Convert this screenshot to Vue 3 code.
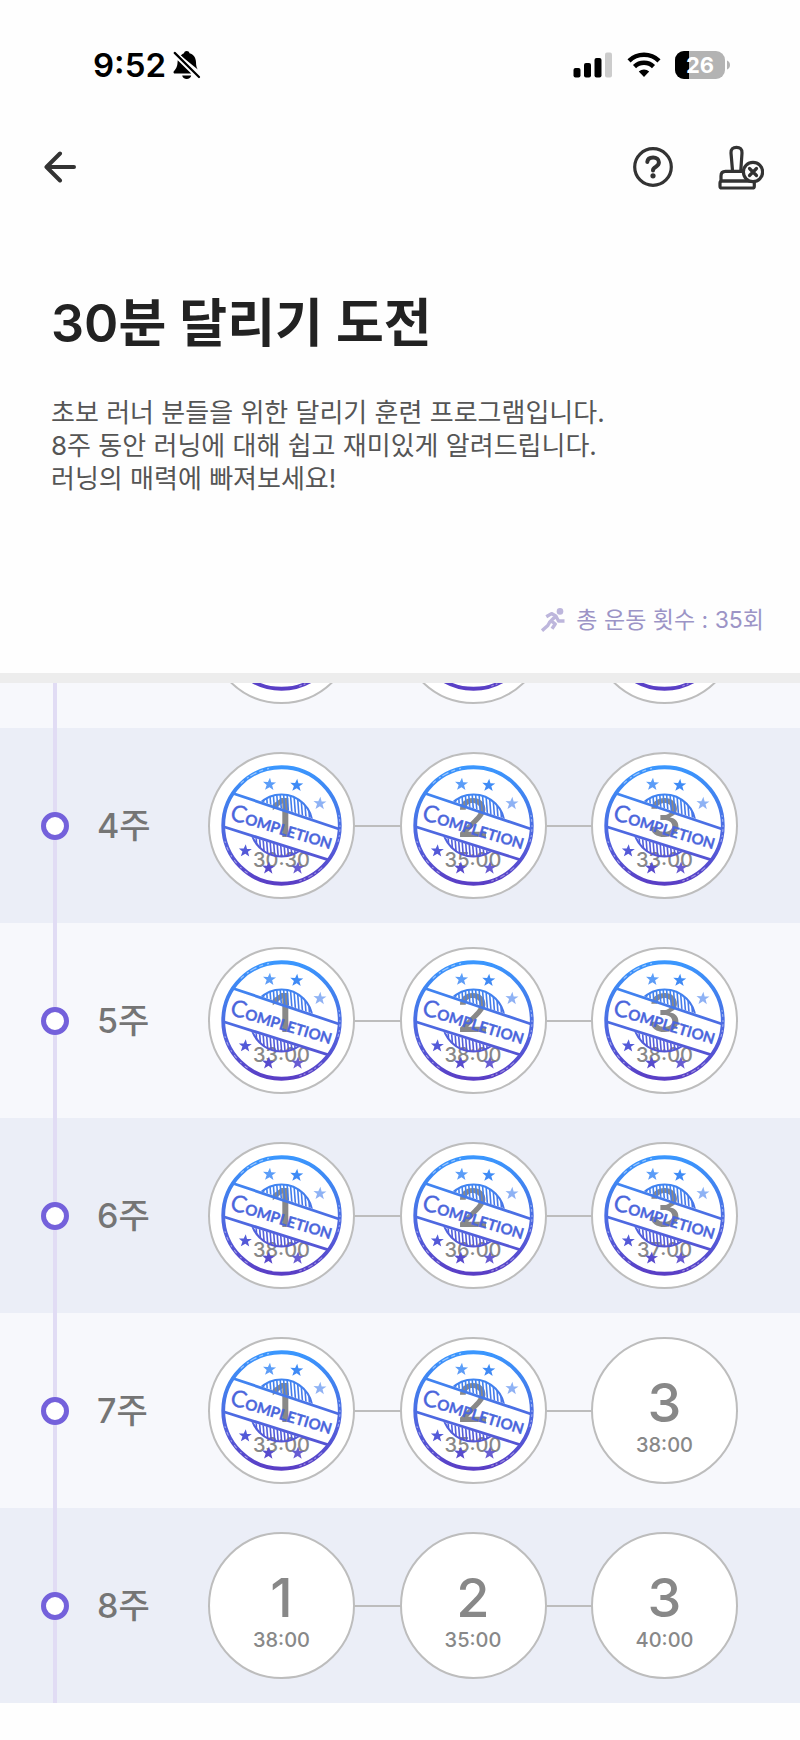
<script setup>
const weeks = [
  { week: 3, clipped: true, runs: [{ done: true }, { done: true }, { done: true }] },
  {
    week: 4,
    runs: [
      { time: '30:30', done: true },
      { time: '35:00', done: true },
      { time: '33:00', done: true }
    ]
  },
  {
    week: 5,
    runs: [
      { time: '33:00', done: true },
      { time: '38:00', done: true },
      { time: '38:00', done: true }
    ]
  },
  {
    week: 6,
    runs: [
      { time: '38:00', done: true },
      { time: '36:00', done: true },
      { time: '37:00', done: true }
    ]
  },
  {
    week: 7,
    runs: [
      { time: '33:00', done: true },
      { time: '35:00', done: true },
      { time: '38:00', done: false }
    ]
  },
  {
    week: 8,
    runs: [
      { time: '38:00', done: false },
      { time: '35:00', done: false },
      { time: '40:00', done: false }
    ]
  }
]

// x, y, opacity
const stars = [
  [48, 19, 0.85],
  [75, 20, 1],
  [98, 38, 0.6],
  [24, 85, 1],
  [47, 102, 1],
  [76, 102, 0.9]
]

const hatch = Array.from({ length: 20 }, (_, i) => 28 + i * 3.4)
</script>

<template>
  <div class="app">
    <!-- Shared stamp artwork -->
    <svg class="defs" width="0" height="0" aria-hidden="true">
      <defs>
        <linearGradient id="ink" gradientUnits="userSpaceOnUse" x1="0" y1="0" x2="0" y2="120">
          <stop offset="0" stop-color="#3a98ff" />
          <stop offset="0.3" stop-color="#4280ee" />
          <stop offset="0.65" stop-color="#5260dc" />
          <stop offset="1" stop-color="#5a3cc4" />
        </linearGradient>
        <clipPath id="outside-banner">
          <path d="M13 27 117 62V0H13ZM4 63 106 95V120H4Z" />
        </clipPath>
        <clipPath id="seal">
          <circle cx="60" cy="60" r="31" />
        </clipPath>
        <symbol id="stamp" viewBox="0 0 120 120">
          <g fill="none" stroke="url(#ink)">
            <circle cx="60" cy="60" r="57.8" stroke-width="3.8" />
            <path d="M13 28.5 117 63.5M3.5 61.5 106.5 94" stroke-width="2.8" />
            <g clip-path="url(#outside-banner)">
              <circle cx="60" cy="60" r="30.8" stroke-width="2" />
              <g clip-path="url(#seal)" stroke-width="1.6">
                <path v-for="x in hatch" :key="x" :d="`M${x} 28 ${x + 5} 92`" />
              </g>
            </g>
          </g>
          <g fill="url(#ink)">
            <g v-for="([x, y, o], i) in stars" :key="i" :opacity="o">
              <path
                :d="`M${x + 0.6} ${y - 6.4}l1.2 4.6 4.8.1-3.9 2.7 1.3 4.8-3.9-2.8-4.4 2.6 1.6-4.8-3.6-3.1 4.8.2z`"
              />
            </g>
          </g>
          <text class="stamp-text" transform="translate(8 54) rotate(16.5)">
            <tspan class="stamp-cap">C</tspan><tspan>OMPLETION</tspan>
          </text>
          <!-- worn ink -->
          <g fill="none" stroke="#fff" stroke-linecap="round">
            <path
              d="M20 18A58 58 0 0 1 50 3"
              stroke-width="1.2"
              stroke-dasharray="3 5 1 3 6 4"
              opacity="0.5"
            />
            <path
              d="M117 50A58 58 0 0 1 116 76"
              stroke-width="1"
              stroke-dasharray="1 3 2 4"
              opacity="0.5"
            />
            <path
              d="M100 102A58 58 0 0 1 78 115"
              stroke-width="1.2"
              stroke-dasharray="4 4 1 3"
              opacity="0.4"
            />
            <path
              d="M4 76A58 58 0 0 0 26 107"
              stroke-width="1"
              stroke-dasharray="1 5 3 6"
              opacity="0.5"
            />
          </g>
        </symbol>
      </defs>
    </svg>

    <div class="status-bar">
      <div class="status-left">
        <span class="clock">9:52</span>
        <svg width="28" height="28" viewBox="0 0 28 28">
          <path
            d="M7.6 4.6C9 3.3 10.3 2.6 11 2.3 11.3.9 12.2 0 13.7 0s2.5.9 2.8 2.3c4.3 1.3 6.4 4.6 6.5 8.9.1 3.6.6 5.5 1.8 7.4zM4.7 9.3 18.2 22.6H2C.8 22.6.3 21.8.6 20.8 1 19.5 4.2 17.7 4.5 12ZM9.2 24.6h9c-.3 2-2.2 3.4-4.5 3.4s-4.2-1.4-4.5-3.4z"
          />
          <path d="M1.7 1.7 26.2 26.2" stroke="#fff" stroke-width="5" />
          <path d="M1.7 1.9 26 26" stroke="#000" stroke-width="2.2" stroke-linecap="round" />
        </svg>
      </div>
      <div class="status-right">
        <svg width="40" height="26" viewBox="0 0 40 26">
          <rect x="0.5" y="16" width="7" height="9.5" rx="2" />
          <rect x="11" y="11" width="7" height="14.5" rx="2" />
          <rect x="21.5" y="6" width="7" height="19.5" rx="2" />
          <rect x="32" y="0.5" width="7" height="25" rx="2" fill="#ccc" />
        </svg>
        <svg width="34" height="26" viewBox="0 0 34 26">
          <g fill="none" stroke="#000" stroke-width="4.4">
            <path d="M2 8.8a21.5 21.5 0 0 1 30 0" />
            <path d="M7.5 14.6a13.6 13.6 0 0 1 19 0" />
          </g>
          <path d="M11.8 19.5a7.6 7.6 0 0 1 10.4 0L17 25z" />
        </svg>
        <svg class="battery" width="56" height="28" viewBox="0 0 56 28">
          <rect width="50" height="28" rx="9" fill="#b3b3b3" />
          <path d="M9 0H14V28H9A9 9 0 0 1 0 19V9A9 9 0 0 1 9 0Z" />
          <path d="M52 9.500c2 .8 3 2.500 3 4.500s-1 3.700-3 4.500z" fill="#b3b3b3" />
          <text x="25" y="22" text-anchor="middle" fill="#fff">26</text>
        </svg>
      </div>
    </div>

    <header class="nav">
      <button type="button" aria-label="뒤로">
        <svg width="32" height="32" viewBox="0 0 32 32" class="line-icon back">
          <path d="M30 16H3M16 2.500 2.500 16 16 29.500" />
        </svg>
      </button>
      <div class="nav-actions">
        <button type="button" aria-label="도움말">
          <svg width="40" height="40" viewBox="0 0 40 40" class="line-icon">
            <circle cx="20" cy="20" r="18.3" />
            <path
              class="question"
              d="M14.300 15c.3-2.900 2.500-4.400 5.800-4.400 3.400 0 5.800 1.800 5.800 4.700 0 2.200-1.100 3.300-3 4.500-2 1.200-2.900 2-2.900 3.600"
            />
            <circle cx="20" cy="28.8" r="2.6" class="dot-fill" />
          </svg>
        </button>
        <button type="button" aria-label="스탬프 삭제">
          <svg width="46" height="46" viewBox="0 0 46 46" class="line-icon">
            <path d="M14.500 26.500 13 9C12.800 5 15 3.400 18.500 3.400S24.200 5 24 9L22.800 26.500" />
            <path d="M25 27.400H7.500C4.500 27.400 3 29 3 32v5H36" />
            <path
              d="M4 37H34.500c1.200 0 1.800.6 1.800 1.800v3.400c0 1.200-.6 1.800-1.800 1.800H3.800C2.600 44 2 43.400 2 42.200V39C2 37.800 2.800 37 4 37Z"
            />
            <circle cx="35" cy="28" r="9.6" class="badge" />
            <path d="M31.500 24.500l7 7M38.500 24.500l-7 7" />
          </svg>
        </button>
      </div>
    </header>

    <section class="intro">
      <h1>30분 달리기 도전</h1>
      <p class="desc">
        초보 러너 분들을 위한 달리기 훈련 프로그램입니다.<br />
        8주 동안 러닝에 대해 쉽고 재미있게 알려드립니다.<br />
        러닝의 매력에 빠져보세요!
      </p>
      <p class="total">
        <svg width="24" height="24" viewBox="0 0 24 24">
          <circle cx="19" cy="3.4" r="3.3" />
          <path
            d="M5.300 8.800 10.500 5.600 14.800 8 8.200 14.800M10.500 13 14.200 16 11 20.800M14.800 8 17.500 13H23.500M8.500 14.500 6.800 17.500 1 22.600"
          />
        </svg>
        <span>총 운동 횟수 : 35회</span>
      </p>
    </section>

    <ul class="weeks">
      <li v-for="w in weeks" :key="w.week" class="week" :class="{ clipped: w.clipped }">
        <div class="rail"><span v-if="!w.clipped" class="rail-dot" /></div>
        <span class="week-label"><template v-if="!w.clipped">{{ w.week }}주</template></span>
        <div class="runs">
          <button v-for="(run, i) in w.runs" :key="i" type="button" class="run">
            <template v-if="!w.clipped">
              <span class="run-no">{{ i + 1 }}</span>
              <span class="run-time">{{ run.time }}</span>
            </template>
            <svg v-if="run.done" class="run-stamp"><use href="#stamp" /></svg>
          </button>
        </div>
      </li>
    </ul>
  </div>
</template>

<style>
body {
  margin: 0;
  background: #fefefe;
}
</style>

<style scoped>
.app {
  font-family: Inter, 'Noto Sans CJK KR', sans-serif;
  color: #222;
}

.defs {
  position: absolute;
}

button {
  padding: 0;
  border: 0;
  background: none;
  font: inherit;
  color: inherit;
  cursor: pointer;
}

svg {
  display: block;
  flex: none;
}

/* Status bar */
.status-bar {
  display: flex;
  align-items: center;
  justify-content: space-between;
  height: 130px;
  padding: 0 69px 0 93px;
  color: #000;
}

.status-left {
  display: flex;
  align-items: center;
  gap: 7px;
}

.clock {
  font-size: 33px;
  font-weight: 600;
  line-height: 40px;
}

.status-right {
  display: flex;
  align-items: center;
  gap: 14px;
}

.battery text {
  font-size: 22px;
  font-weight: 700;
}

/* Navigation */
.nav {
  display: flex;
  align-items: center;
  justify-content: space-between;
  height: 74px;
  padding: 0 36px 0 44px;
}

.nav-actions {
  display: flex;
  align-items: center;
  gap: 45px;
}

.line-icon {
  fill: none;
  stroke: #333;
  stroke-width: 3.2;
  stroke-linecap: round;
  stroke-linejoin: round;
}

.back,
.question {
  stroke-width: 4;
}

.dot-fill {
  fill: #333;
  stroke: none;
}

.badge {
  fill: #fefefe;
}

/* Intro */
.intro {
  padding: 88px 36px 38px 51px;
  border-bottom: 10px solid #ededed;
}

h1 {
  margin: 0;
  font-size: 52px;
  font-weight: 600;
  line-height: 64px;
}

.desc {
  margin: 40px 0 0;
  font-size: 26px;
  line-height: 33px;
  color: #555;
}

.total {
  display: flex;
  align-items: center;
  justify-content: flex-end;
  gap: 11px;
  margin: 110px 0 0;
  font-size: 23px;
  line-height: 30px;
  color: #9c94c6;
}

.total circle {
  fill: #bdb6dc;
}

.total path {
  fill: none;
  stroke: #bdb6dc;
  stroke-width: 3.4;
  stroke-linejoin: round;
}

/* Weeks */
.weeks {
  margin: 0;
  padding: 0;
  list-style: none;
}

.week {
  display: flex;
  align-items: center;
  height: 195px;
  padding: 0 62px 0 41px;
  background: #f7f8fc;
}

.week:nth-child(even) {
  background: #ebeef7;
}

/* first visible row is scrolled mostly out of view */
.week.clipped {
  align-items: flex-end;
  height: 45px;
  overflow: hidden;
}

.rail {
  display: flex;
  flex: none;
  align-items: center;
  width: 28px;
  height: 195px;
  background: linear-gradient(#e1dcf4, #e1dcf4) center / 4px 100% no-repeat;
}

.rail-dot {
  box-sizing: border-box;
  width: 28px;
  height: 28px;
  border: 5px solid #7461db;
  border-radius: 50%;
  background: #fff;
}

.week-label {
  flex: none;
  width: 111px;
  margin-left: 28px;
  font-size: 34px;
  font-weight: 500;
  line-height: 40px;
  color: #757575;
}

/* connector runs behind the circles */
.runs {
  display: flex;
  flex: 1;
  justify-content: space-between;
  background: linear-gradient(#bdbdbd, #bdbdbd) center / 100% 2px no-repeat;
}

.clipped .runs {
  padding-bottom: 24px;
  background: none;
}

.run {
  position: relative;
  display: flex;
  flex-direction: column;
  align-items: center;
  box-sizing: border-box;
  width: 147px;
  height: 147px;
  padding-top: 35px;
  border: 2px solid #bdbdbd;
  border-radius: 50%;
  background: #fff;
}

.run-no {
  font-size: 54px;
  font-weight: 500;
  line-height: 58px;
  color: #888;
}

.run-time {
  font-size: 20px;
  font-weight: 500;
  line-height: 26px;
  color: #888;
}

.run-stamp {
  position: absolute;
  inset: 11px;
  width: 121px;
  height: 121px;
}

.stamp-text {
  font-family: Lato, sans-serif;
  font-size: 15px;
  font-weight: 700;
  fill: #4b66dc;
  stroke: #4b66dc;
  stroke-width: 0.3;
}

.stamp-cap {
  font-size: 23px;
  font-weight: 400;
}
</style>
